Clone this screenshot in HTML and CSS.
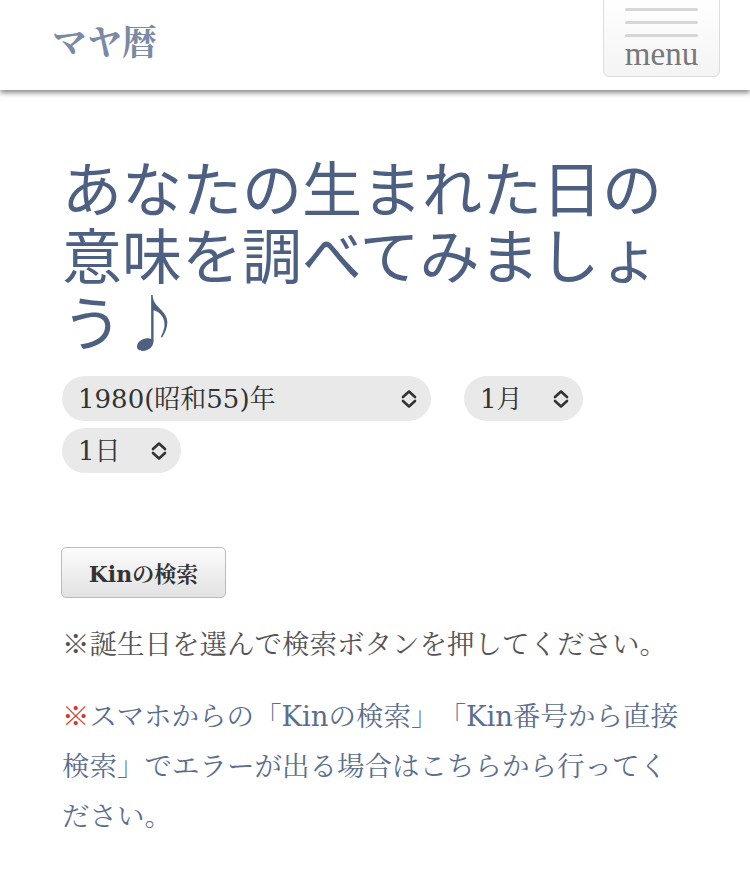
FILE: index.html
```html
<!DOCTYPE html>
<html lang="ja">
<head>
    <meta charset="UTF-8">
    <meta name="viewport" content="width=device-width, initial-scale=1.0">
    <title>マヤ暦 | Kinの検索</title>
    <link rel="stylesheet" href="styles.css">
</head>
<body>
    <header class="site-header">
        <div class="logo">マヤ暦</div>
        <button class="menu-btn" type="button">
            <span class="bar"></span>
            <span class="bar"></span>
            <span class="bar"></span>
            <span class="menu-label">menu</span>
        </button>
    </header>

    <main class="content">
        <h1 class="title">あなたの生まれた日の意味を調べてみましょう♪</h1>

        <form class="kin-form" onsubmit="return false;">
            <div class="selects">
                <span class="select-wrap year">
                    <select id="year">
                        <option>1980(昭和55)年</option>
                    </select>
                    <svg class="chevron" viewBox="0 0 16 20" width="16" height="20"><path d="M2 8 L8 2.5 L14 8 M2 12 L8 17.5 L14 12" fill="none" stroke="#333" stroke-width="2.6" stroke-linecap="round" stroke-linejoin="round"/></svg>
                </span>
                <span class="select-wrap month">
                    <select id="month">
                        <option>1月</option>
                    </select>
                    <svg class="chevron" viewBox="0 0 16 20" width="16" height="20"><path d="M2 8 L8 2.5 L14 8 M2 12 L8 17.5 L14 12" fill="none" stroke="#333" stroke-width="2.6" stroke-linecap="round" stroke-linejoin="round"/></svg>
                </span>
                <span class="select-wrap day">
                    <select id="day">
                        <option>1日</option>
                    </select>
                    <svg class="chevron" viewBox="0 0 16 20" width="16" height="20"><path d="M2 8 L8 2.5 L14 8 M2 12 L8 17.5 L14 12" fill="none" stroke="#333" stroke-width="2.6" stroke-linecap="round" stroke-linejoin="round"/></svg>
                </span>
            </div>

            <button class="search-btn" type="submit">Kinの検索</button>
        </form>

        <p class="note">※誕生日を選んで検索ボタンを押してください。</p>

        <p class="note link-note"><span class="mark">※</span><a class="link-text" href="#">スマホからの「Kinの検索」「Kin番号から直接検索」でエラーが出る場合はこちらから行ってください。</a></p>
    </main>
</body>
</html>
```

FILE: styles.css
```css
body, html {
    margin: 0;
    padding: 0;
    background: #fff;
    font-family: "DejaVu Serif", "Noto Serif CJK JP", "Noto Sans CJK JP", serif;
    color: #555;
    text-spacing-trim: space-all;
}

/* Header */
.site-header {
    height: 90px;
    display: flex;
    justify-content: space-between;
    align-items: flex-start;
    padding: 0 30px 0 52px;
    background: #fff;
    box-shadow: 0 3px 5px rgba(0, 0, 0, 0.45);
    position: relative;
    z-index: 2;
}

.logo {
    margin-top: 15px;
    font-size: 35px;
    font-weight: bold;
    color: #7a89a4;
}

.menu-btn {
    width: 117px;
    height: 82px;
    margin-top: -5px;
    padding: 12px 0 0;
    display: flex;
    flex-direction: column;
    align-items: center;
    gap: 10px;
    border: 1px solid #ddd;
    border-radius: 6px;
    background: linear-gradient(#fff, #f4f4f4);
}

.menu-btn .bar {
    width: 73px;
    height: 3px;
    border-radius: 2px;
    background: #d6d6d6;
}

.menu-btn .menu-label {
    margin-top: -8px;
    font-family: "Liberation Serif", serif;
    font-size: 33px;
    line-height: 30px;
    color: #777;
}

/* Content */
.content {
    padding: 0 68px 0 62px;
}

.title {
    margin: 62px 0 23px;
    font-family: "Noto Sans CJK JP", sans-serif;
    font-size: 60px;
    font-weight: normal;
    line-height: 67px;
    color: #4d6082;
}

.selects {
    display: flex;
    flex-wrap: wrap;
    column-gap: 33px;
    row-gap: 7px;
}

.select-wrap {
    position: relative;
    display: inline-block;
}

.select-wrap select {
    appearance: none;
    -webkit-appearance: none;
    height: 45px;
    padding: 0 50px 0 16px;
    border: none;
    border-radius: 23px;
    background: #e9e9e9;
    font-family: inherit;
    font-size: 26px;
    color: #333;
    outline: none;
}

.select-wrap.year select { width: 369px; }
.select-wrap.month select,
.select-wrap.day select { width: 119px; }

.chevron {
    position: absolute;
    right: 14px;
    top: 13px;
    pointer-events: none;
}

.search-btn {
    margin: 74px 0 0 -1px;
    width: 165px;
    height: 51px;
    border: 1px solid #bbb;
    border-radius: 5px;
    background: linear-gradient(#fcfcfc, #e2e2e2);
    font-family: inherit;
    font-size: 22px;
    font-weight: bold;
    color: #333;
}

.note {
    margin: 21px 0 0;
    font-size: 27.5px;
    line-height: 50px;
    color: #555;
}

.link-note {
    margin-top: 20px;
}

.link-note .mark {
    font-family: "Noto Serif CJK JP", "Noto Sans CJK JP", serif;
    color: #d33a2c;
}

.link-note .link-text {
    color: #5b6e8e;
    text-decoration: none;
}
```
